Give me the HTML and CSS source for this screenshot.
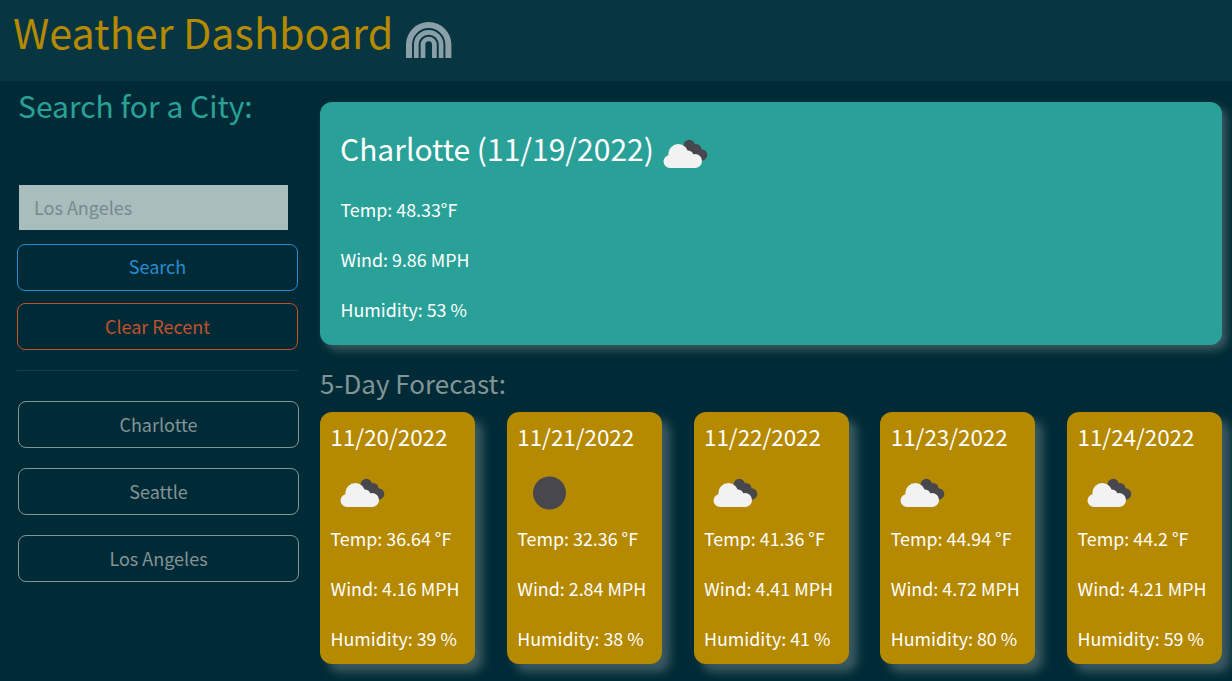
FILE: index.html
```html
<!DOCTYPE html>
<html lang="en">
<head>
    <meta charset="UTF-8">
    <meta name="viewport" content="width=device-width, initial-scale=1.0">
    <title>Weather Dashboard</title>
    <link rel="stylesheet" href="styles.css">
</head>
<body>
    <svg class="defs" width="0" height="0" aria-hidden="true">
        <symbol id="clouds" viewBox="0 0 50 50">
            <!-- dark cloud behind -->
            <g fill="#47474d">
                <circle cx="27.300" cy="12.500" r="5.700"/>
                <circle cx="34" cy="16.500" r="5.500"/>
                <circle cx="39.500" cy="22" r="5.800"/>
                <rect x="25" y="15" width="14" height="12"/>
            </g>
            <!-- white cloud in front -->
            <g fill="#f2f2f2">
                <circle cx="16.300" cy="21" r="10"/>
                <circle cx="8" cy="28.500" r="6.500"/>
                <circle cx="26" cy="23" r="5.500"/>
                <circle cx="33" cy="28" r="7"/>
                <rect x="8" y="24" width="25" height="11"/>
            </g>
        </symbol>
    </svg>

    <header class="top-bar">
        <h1>Weather Dashboard</h1>
        <svg class="rainbow" viewBox="0 0 46 36" aria-hidden="true">
            <path d="M3 36V22.700a19.700 19.700 0 0 1 39.400 0V36" class="arc-outer"/>
            <path d="M10.300 36V22.700a12.400 12.400 0 0 1 24.800 0V36" class="arc-inner"/>
            <path d="M17 36V22.700a5.700 5.700 0 0 1 11.400 0V36" class="arc-inner"/>
        </svg>
    </header>

    <div class="page">
        <aside class="sidebar">
            <h2>Search for a City:</h2>
            <input class="city-input" type="text" placeholder="Los Angeles">
            <button class="btn btn-search">Search</button>
            <button class="btn btn-clear">Clear Recent</button>
            <hr>
            <div class="history">
                <button class="btn btn-city">Charlotte</button>
                <button class="btn btn-city">Seattle</button>
                <button class="btn btn-city">Los Angeles</button>
            </div>
        </aside>

        <main class="content">
            <section class="today">
                <div class="today-title">
                    <h2>Charlotte (11/19/2022)</h2>
                    <svg class="icon-today"><use href="#clouds"/></svg>
                </div>
                <p>Temp: 48.33°F</p>
                <p>Wind: 9.86 MPH</p>
                <p>Humidity: 53 %</p>
            </section>

            <h3>5-Day Forecast:</h3>
            <div class="forecast">
                <div class="day">
                    <h4>11/20/2022</h4>
                    <svg class="icon-day"><use href="#clouds"/></svg>
                    <p>Temp: 36.64 °F</p>
                    <p>Wind: 4.16 MPH</p>
                    <p>Humidity: 39 %</p>
                </div>
                <div class="day">
                    <h4>11/21/2022</h4>
                    <svg class="icon-day" viewBox="0 0 50 50"><circle cx="24.500" cy="21" r="16.500" fill="#47474d"/></svg>
                    <p>Temp: 32.36 °F</p>
                    <p>Wind: 2.84 MPH</p>
                    <p>Humidity: 38 %</p>
                </div>
                <div class="day">
                    <h4>11/22/2022</h4>
                    <svg class="icon-day"><use href="#clouds"/></svg>
                    <p>Temp: 41.36 °F</p>
                    <p>Wind: 4.41 MPH</p>
                    <p>Humidity: 41 %</p>
                </div>
                <div class="day">
                    <h4>11/23/2022</h4>
                    <svg class="icon-day"><use href="#clouds"/></svg>
                    <p>Temp: 44.94 °F</p>
                    <p>Wind: 4.72 MPH</p>
                    <p>Humidity: 80 %</p>
                </div>
                <div class="day">
                    <h4>11/24/2022</h4>
                    <svg class="icon-day"><use href="#clouds"/></svg>
                    <p>Temp: 44.2 °F</p>
                    <p>Wind: 4.21 MPH</p>
                    <p>Humidity: 59 %</p>
                </div>
            </div>
        </main>
    </div>
</body>
</html>
```

FILE: styles.css
```css
* {
    box-sizing: border-box;
}

body {
    margin: 0;
    height: 681px;
    overflow: hidden;
    background-color: #002b36;
    color: #fff;
    font-family: "Noto Sans CJK SC", "Open Sans", sans-serif;
    font-size: 18px;
    line-height: 27px;
}

.defs {
    position: absolute;
}

h1, h2, h3, h4, p {
    margin: 0;
    font-weight: 400;
}

.top-bar {
    display: flex;
    align-items: center;
    height: 81px;
    padding: 0 0 19px 13px;
    background-color: #073642;
}

.top-bar h1 {
    color: #b58900;
    font-size: 41.300px;
    line-height: 54px;
}

.rainbow {
    width: 46px;
    height: 36px;
    margin: 18px 0 0 13px;
    fill: none;
}

.arc-outer {
    stroke: #8b9fa6;
    stroke-width: 6px;
}

.arc-inner {
    stroke: #8b9fa6;
    stroke-width: 4.700px;
}

.page {
    display: flex;
    padding: 0 10px 0 17px;
}

.sidebar {
    width: 281px;
    flex-shrink: 0;
    display: flex;
    flex-direction: column;
}

.sidebar h2 {
    margin: 5px 0 0 1px;
    color: #2aa198;
    font-size: 30px;
    line-height: 38px;
}

.city-input {
    width: 269px;
    height: 45px;
    margin: 61px 0 14px 2px;
    padding: 0 15px 2px;
    border: none;
    background-color: #a9bdbd;
    font: inherit;
}

.city-input::placeholder {
    color: #768a8f;
    opacity: 1;
}

.btn {
    height: 47px;
    border: 1px solid;
    border-radius: 8px;
    background: transparent;
    font: inherit;
}

.btn-search {
    margin-bottom: 12px;
    padding-bottom: 3px;
    border-color: #268bd2;
    color: #268bd2;
}

.btn-clear {
    border-color: #c1522b;
    color: #c1522b;
}

.sidebar hr {
    width: 100%;
    height: 1px;
    margin: 20px 0 30px;
    border: none;
    background-color: #173f4a;
}

.history {
    display: flex;
    flex-direction: column;
    gap: 20px;
    margin: 0 -1px 0 1px;
}

.btn-city {
    border-color: #839496;
    color: #839496;
}

.content {
    flex: 1;
    margin: 21px 0 0 22px;
}

.today {
    height: 243px;
    padding: 25px 20px 0;
    border-radius: 12px;
    background-color: #2aa198;
    box-shadow: 5px 5px 8px rgba(147, 161, 161, 0.4);
}

.today-title {
    display: flex;
    align-items: flex-start;
    height: 48px;
    margin-bottom: 21px;
}

.today-title h2 {
    font-size: 30px;
    line-height: 42px;
}

.icon-today {
    width: 50px;
    height: 50px;
    margin: 5.500px 0 0 8px;
}

.today p {
    height: 50px;
    margin-left: 0.500px;
    font-size: 17.850px;
}

h3 {
    margin: 22px 0 14px;
    color: #839496;
    font-size: 26px;
    line-height: 31px;
}

.forecast {
    display: flex;
    justify-content: space-between;
}

.day {
    width: 155px;
    height: 252px;
    padding: 9px 10px 0 10.500px;
    border-radius: 12px;
    background-color: #b58900;
    box-shadow: 8px 8px 10px rgba(147, 161, 161, 0.4);
}

.day h4 {
    font-size: 22.400px;
    line-height: 30px;
}

.icon-day {
    display: block;
    width: 50px;
    height: 50px;
    margin: 21px 0 3px 8px;
}

.day p {
    height: 50px;
    font-size: 17.850px;
}
```
